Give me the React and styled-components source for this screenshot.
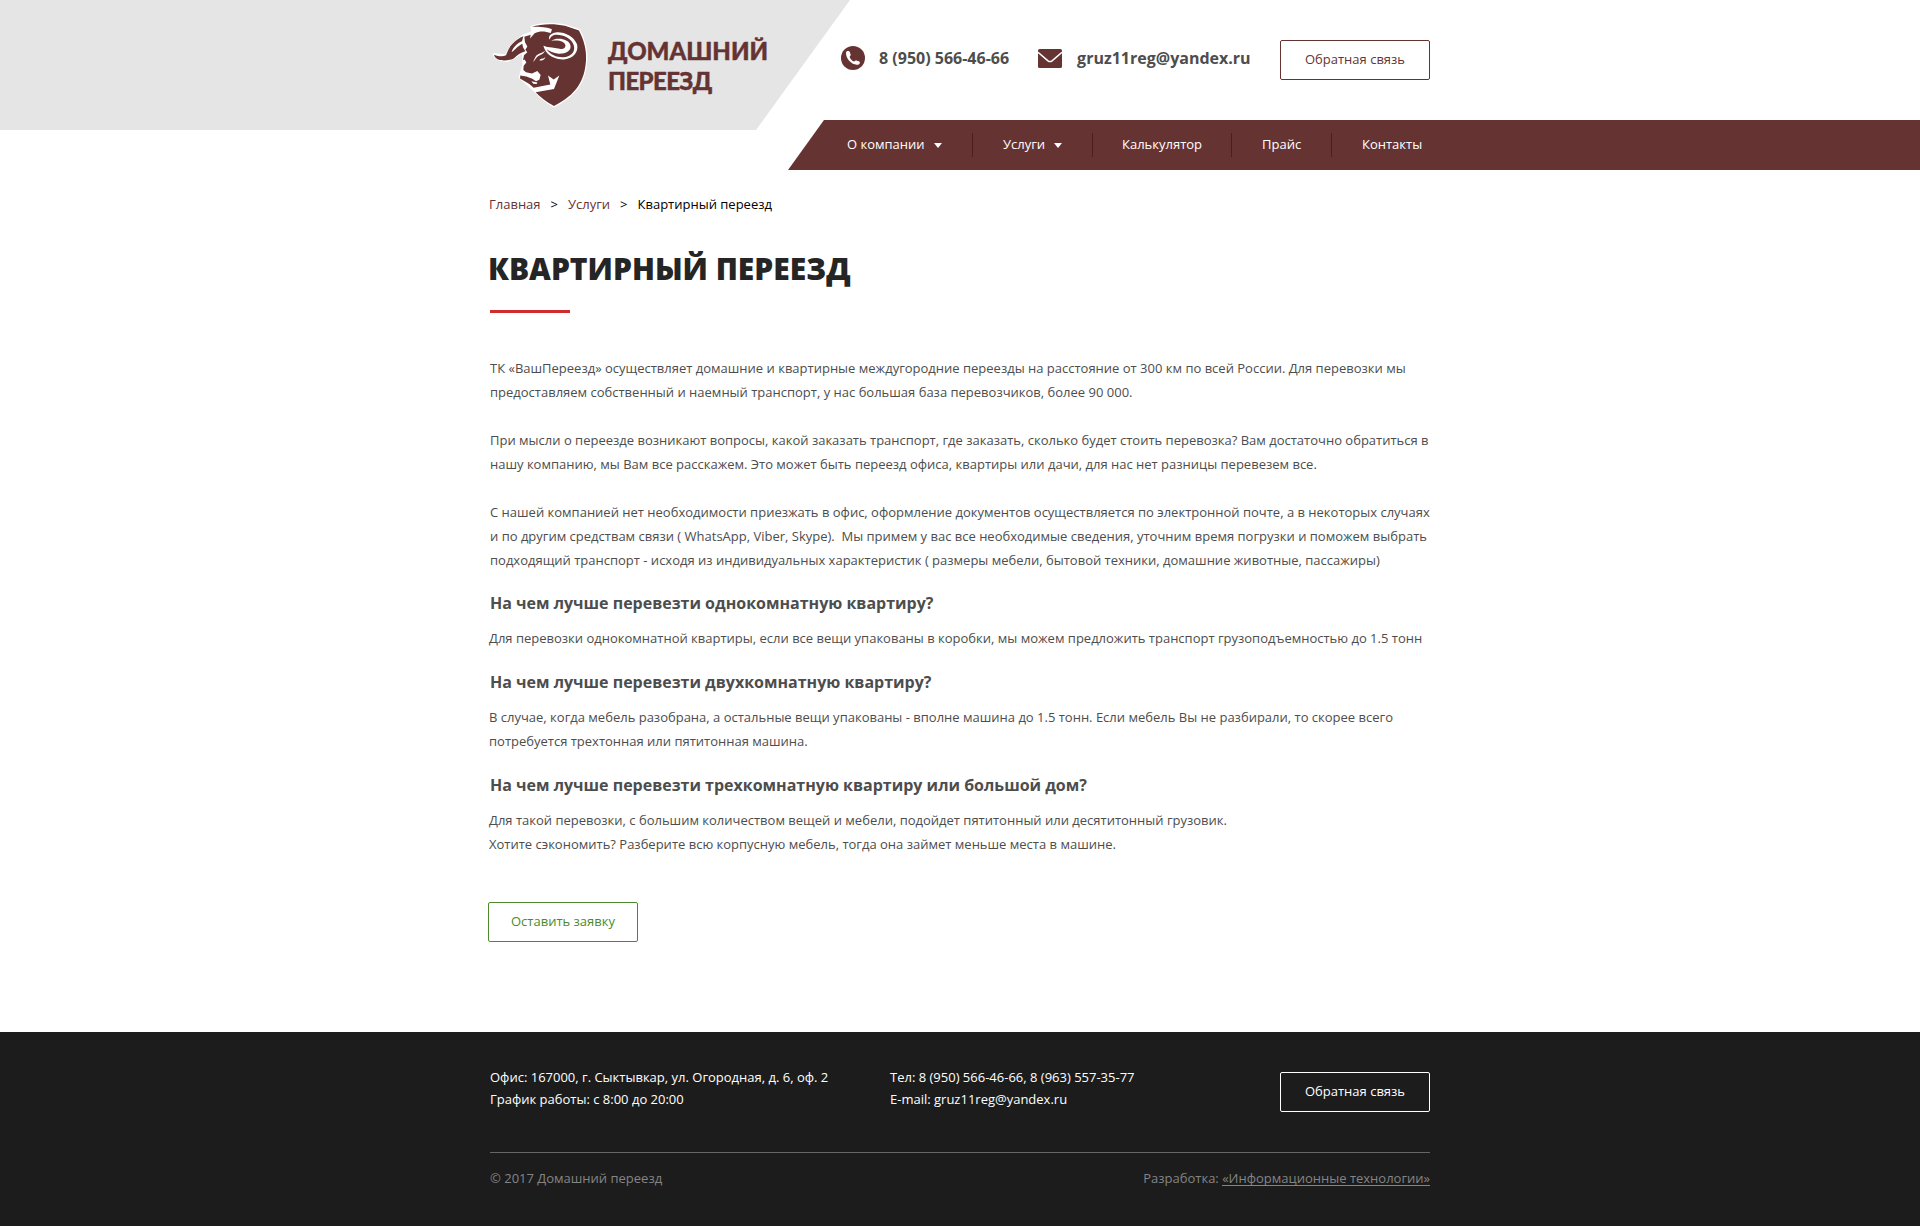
import React from 'react';
import styled, { createGlobalStyle } from 'styled-components';

const MAROON = '#663333';

const GlobalStyle = createGlobalStyle`
  * { box-sizing: border-box; }
  body {
    margin: 0;
    background: #fff;
    color: #4d4d4d;
    font: 400 13px/24px 'Open Sans', 'Noto Sans', sans-serif;
  }
  a { color: inherit; text-decoration: none; }
  h1, h2, p { margin: 0; }
`;

const Page = styled.div`
  width: 1920px;
  height: 1226px;
  display: flex;
  flex-direction: column;
`;

const Header = styled.header`
  display: flex;
  align-items: flex-start;
  height: 170px;
`;

const LogoPlate = styled.div`
  display: flex;
  width: 850px;
  height: 130px;
  padding: 15px 0 0 480px;
  background: #e5e5e5;
  clip-path: polygon(0 0, 100% 0, 756px 100%, 0 100%);
`;

const LogoText = styled.div`
  padding: 21px 0 0 8px;
  color: ${MAROON};
  font: 900 24px/30px Lato, 'Open Sans', sans-serif;
  -webkit-text-stroke: 0.4px ${MAROON};
`;

const LogoLine = styled.div`
  letter-spacing: ${(p) => p.$tracking || 0}px;
  white-space: nowrap;
`;

const HeaderSide = styled.div`
  flex: 1;
  margin-left: -62px;
`;

const Contacts = styled.div`
  display: flex;
  align-items: center;
  height: 120px;
  padding: 0 490px 4px 53px;
`;

const ContactLink = styled.a`
  display: flex;
  align-items: center;
  gap: ${(p) => p.$gap}px;
  margin-right: ${(p) => p.$after || 0}px;
  font-size: 16px;
  font-weight: 700;
  line-height: 22px;
  white-space: nowrap;
`;

const Button = styled.button`
  width: 150px;
  height: 40px;
  padding: 0 0 2px;
  border: 1px solid ${(p) => p.$color};
  border-radius: 2px;
  background: transparent;
  color: ${(p) => p.$color};
  font: inherit;
  line-height: 18px;
`;

const HeaderButton = styled(Button)`
  margin: 4px 0 0 auto;
`;

const Nav = styled.nav`
  display: flex;
  align-items: center;
  height: 50px;
  padding-left: 29px;
  background: ${MAROON};
  color: #fff;
  clip-path: polygon(36px 0, 100% 0, 100% 100%, 0 100%);
`;

const NavItem = styled.a`
  display: flex;
  align-items: center;
  gap: 9px;
  width: ${(p) => p.$width}px;
  height: 24px;
  padding: 0 0 2px ${(p) => p.$indent || 30}px;
  border-right: ${(p) => (p.$last ? 'none' : '1px solid #4f1c1c')};
`;

const Caret = styled.span`
  margin-top: 3px;
  border: 4px solid transparent;
  border-top: 5px solid #fff;
  border-bottom: 0;
`;

const Main = styled.main`
  flex: 1;
  width: 944px;
  margin-left: 488px;
`;

const Breadcrumbs = styled.div`
  display: flex;
  gap: 10px;
  margin-top: 22px;
  padding-left: 1px;
  color: #000;
`;

const Crumb = styled.a`
  color: ${MAROON};
`;

const Title = styled.h1`
  margin-top: 33px;
  color: #252525;
  font-size: 30px;
  font-weight: 800;
  line-height: 40px;

  &::after {
    content: '';
    display: block;
    width: 80px;
    height: 3px;
    margin: 21px 0 0 2px;
    background: #d02b2e;
  }
`;

const Intro = styled.div`
  display: grid;
  gap: 24px;
  margin-top: 43px;
  padding-left: 2px;
  white-space: pre;
`;

const Question = styled.h2`
  margin-top: ${(p) => p.$top}px;
  padding-left: 2px;
  font-size: 16px;
  font-weight: 700;
  line-height: 24px;
`;

const Answer = styled.p`
  margin-top: 11px;
  padding-left: 1px;
  white-space: pre;
`;

const OrderButton = styled(Button)`
  margin-top: 46px;
`;

const Footer = styled.footer`
  height: 194px;
  padding: 40px 490px 0;
  background: #1c1c1c;
  color: #fff;
`;

const FooterTop = styled.div`
  display: grid;
  grid-template-columns: 400px 1fr 150px;
  height: 81px;
  border-bottom: 1px solid #666;
`;

const FooterText = styled.div`
  margin-top: -6px;
  line-height: 22px;
`;

const FooterBottom = styled.div`
  display: flex;
  justify-content: space-between;
  padding-top: 16px;
  color: #848484;
  line-height: 18px;
`;

const Developer = styled.a`
  display: inline-block;
  height: 17px;
  border-bottom: 1px solid #848484;
`;

function Bull() {
  return (
    <svg width="120" height="100" viewBox="0 0 360 300">
      <path
        d="M155 35C185 26 225 26 255 32L297 46C312 75 320 104 318 136C314 196 290 238 222 273C198 260 178 243 165 227L120 187L131 150L130 110L100 128L80 137C60 136 48 130 42 119L78 122L95 92L128 64L160 51Z"
        fill="#fff"
        stroke="#fff"
        strokeWidth="8"
        strokeLinejoin="round"
      />
      <path
        fill={MAROON}
        transform="translate(0 5) scale(1 .982)"
        d="M155 31C185 21 225 21 255 28L297 42C312 72 320 102 318 134C314 195 290 238 222 273C198 260 180 246 167 231L222 221L238 180L221 192L204 180L211 207L180 213L161 217L148 206L120 189L121 180L139 183L157 190L168 197L178 193L182 178L172 166L156 174L138 170L130 163L131 150L139 140L134 131L129 133L132 118L142 109L136 101L142 91L135 78L133 61L152 55L150 67L164 51C178 43 195 44 212 50L216 39C205 33 185 30 155 31Z"
      />
      <path
        fill={MAROON}
        d="M42 119C55 124 68 126 78 121C84 108 88 94 100 84C108 76 118 69 130 64L126 79C112 84 98 98 95 112L104 104C114 94 120 90 127 86L129 97L136 109C122 113 112 120 102 130C90 137 66 139 53 133C47 129 43 124 42 119Z"
      />
      <g fill="#fff" transform="translate(0 5) scale(1 .982)">
        <path
          transform="translate(0 2.6) scale(1 .89)"
          d="M208 76C204 64 212 53 228 51C255 49 282 66 291 92C297 116 281 142 252 144C226 145 203 131 194 109L190 97C205 104 226 103 243 108C251 108 258 102 256 94C254 83 238 76 213 80C233 66 266 74 271 94C276 114 256 125 236 124C220 123 209 115 200 109C212 130 234 138 252 136C276 133 287 114 281 94C275 70 247 57 226 59C215 61 212 68 208 76Z"
        />
        <path d="M159 138C166 135 168 121 181 117C188 114 193 110 195 104C187 111 175 112 169 119C165 125 163 132 159 138ZM178 133C187 136 194 131 196 123C189 130 184 126 178 133Z" />
        <path d="M154 197L172 201L170 206L160 205Z" />
      </g>
    </svg>
  );
}

function PhoneIcon() {
  return (
    <svg width="24" height="24" viewBox="0 0 24 24">
      <circle cx="12" cy="12" r="12" fill={MAROON} />
      <path
        d="M6.2 5.1C7.4 4.9 8.6 5.2 8.9 6.2L9.7 8.8C9.9 9.7 8.9 10.1 8.7 10.9C9.1 12.7 11.4 15.1 13 15.4C13.8 15.2 14.3 14.2 15.2 14.5L17.9 15.2C18.9 15.6 19.1 16.5 18.7 17.4C18.1 18.5 17 19 15.6 18.8C10.6 18.3 5.7 13.5 5.1 8.3C4.9 7 5.1 5.6 6.2 5.1Z"
        fill="#fff"
      />
    </svg>
  );
}

function MailIcon() {
  return (
    <svg width="24" height="19" viewBox="0 0 24 19">
      <rect width="24" height="19" rx="1.6" fill={MAROON} />
      <path d="M0 3.2L10 11.8Q12 13.4 14 11.8L24 3.2" fill="none" stroke="#fff" strokeWidth="1.5" />
    </svg>
  );
}

const NAV = [
  { label: 'О компании', width: 156, menu: true },
  { label: 'Услуги', width: 120, menu: true },
  { label: 'Калькулятор', width: 139, indent: 29 },
  { label: 'Прайс', width: 100 },
  { label: 'Контакты', width: 120 },
];

const INTRO = [
  'ТК «ВашПереезд» осуществляет домашние и квартирные междугородние переезды на расстояние от 300 км по всей России. Для перевозки мы\nпредоставляем собственный и наемный транспорт, у нас большая база перевозчиков, более 90 000.',
  'При мысли о переезде возникают вопросы, какой заказать транспорт, где заказать, сколько будет стоить перевозка? Вам достаточно обратиться в\nнашу компанию, мы Вам все расскажем. Это может быть переезд офиса, квартиры или дачи, для нас нет разницы перевезем все.',
  'С нашей компанией нет необходимости приезжать в офис, оформление документов осуществляется по электронной почте, а в некоторых случаях\nи по другим средствам связи ( WhatsApp, Viber, Skype).  Мы примем у вас все необходимые сведения, уточним время погрузки и поможем выбрать\nподходящий транспорт - исходя из индивидуальных характеристик ( размеры мебели, бытовой техники, домашние животные, пассажиры)',
];

const FAQ = [
  {
    top: 19,
    q: 'На чем лучше перевезти однокомнатную квартиру?',
    a: 'Для перевозки однокомнатной квартиры, если все вещи упакованы в коробки, мы можем предложить транспорт грузоподъемностью до 1.5 тонн',
  },
  {
    top: 20,
    q: 'На чем лучше перевезти двухкомнатную квартиру?',
    a: 'В случае, когда мебель разобрана, а остальные вещи упакованы - вполне машина до 1.5 тонн. Если мебель Вы не разбирали, то скорее всего\nпотребуется трехтонная или пятитонная машина.',
  },
  {
    top: 20,
    q: 'На чем лучше перевезти трехкомнатную квартиру или большой дом?',
    a: 'Для такой перевозки, с большим количеством вещей и мебели, подойдет пятитонный или десятитонный грузовик.\nХотите сэкономить? Разберите всю корпусную мебель, тогда она займет меньше места в машине.',
  },
];

export default function App() {
  return (
    <Page>
      <GlobalStyle />
      <Header>
        <LogoPlate>
          <Bull />
          <LogoText>
            <LogoLine>ДОМАШНИЙ</LogoLine>
            <LogoLine $tracking={-0.6}>ПЕРЕЕЗД</LogoLine>
          </LogoText>
        </LogoPlate>
        <HeaderSide>
          <Contacts>
            <ContactLink href="#" $gap={14} $after={29}>
              <PhoneIcon />
              8 (950) 566-46-66
            </ContactLink>
            <ContactLink href="#" $gap={15}>
              <MailIcon />
              gruz11reg@yandex.ru
            </ContactLink>
            <HeaderButton $color={MAROON}>Обратная связь</HeaderButton>
          </Contacts>
          <Nav>
            {NAV.map((item, i) => (
              <NavItem
                key={item.label}
                href="#"
                $width={item.width}
                $indent={item.indent}
                $last={i === NAV.length - 1}
              >
                {item.label}
                {item.menu && <Caret />}
              </NavItem>
            ))}
          </Nav>
        </HeaderSide>
      </Header>
      <Main>
        <Breadcrumbs>
          <Crumb href="#">Главная</Crumb>
          <span>&gt;</span>
          <Crumb href="#">Услуги</Crumb>
          <span>&gt;</span>
          <span>Квартирный переезд</span>
        </Breadcrumbs>
        <Title>КВАРТИРНЫЙ ПЕРЕЕЗД</Title>
        <Intro>
          {INTRO.map((text) => (
            <p key={text}>{text}</p>
          ))}
        </Intro>
        {FAQ.map((item) => (
          <section key={item.q}>
            <Question $top={item.top}>{item.q}</Question>
            <Answer>{item.a}</Answer>
          </section>
        ))}
        <OrderButton $color="#4b8b2b">Оставить заявку</OrderButton>
      </Main>
      <Footer>
        <FooterTop>
          <FooterText>
            Офис: 167000, г. Сыктывкар, ул. Огородная, д. 6, оф. 2<br />
            График работы: с 8:00 до 20:00
          </FooterText>
          <FooterText>
            Тел: 8 (950) 566-46-66, 8 (963) 557-35-77<br />
            E-mail: gruz11reg@yandex.ru
          </FooterText>
          <Button $color="#fff">Обратная связь</Button>
        </FooterTop>
        <FooterBottom>
          <span>© 2017 Домашний переезд</span>
          <span>
            Разработка: <Developer href="#">«Информационные технологии»</Developer>
          </span>
        </FooterBottom>
      </Footer>
    </Page>
  );
}
